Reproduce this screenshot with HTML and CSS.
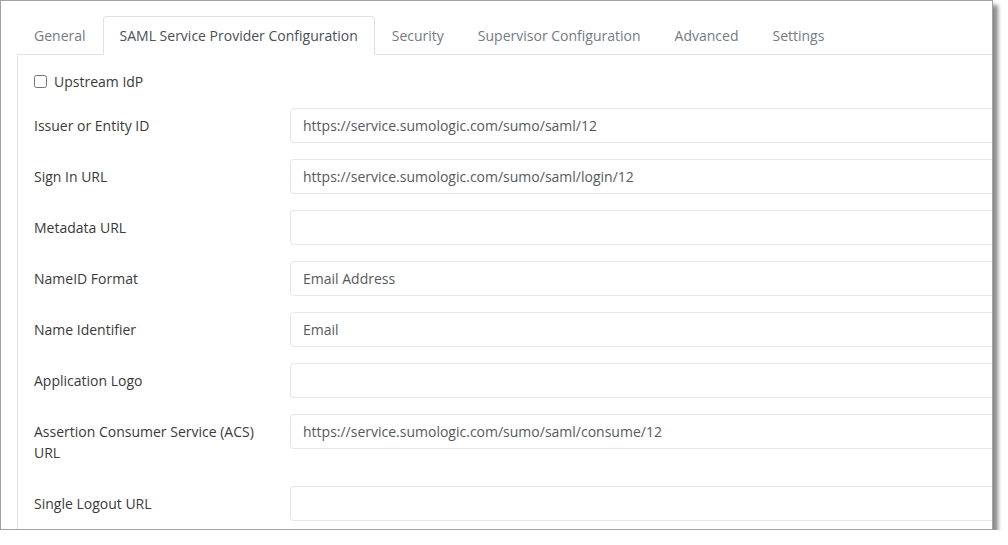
FILE: index.html
```html
<!DOCTYPE html>
<html>
<head>
<meta charset="utf-8">
<link rel="stylesheet" href="styles.css">
</head>
<body>
<div class="frame">
  <div class="tabs-wrap">
    <ul class="nav">
      <li class="nav-link">General</li>
      <li class="nav-link active">SAML Service Provider Configuration</li>
      <li class="nav-link">Security</li>
      <li class="nav-link">Supervisor Configuration</li>
      <li class="nav-link">Advanced</li>
      <li class="nav-link">Settings</li>
    </ul>
    <div class="panel">
      <div class="check-row">
        <input type="checkbox" class="check" id="upstream">
        <label for="upstream" class="check-label">Upstream IdP</label>
      </div>
      <div class="form-row">
        <label class="form-label">Issuer or Entity ID</label>
        <input class="form-control" type="text" value="https://service.sumologic.com/sumo/saml/12" readonly>
      </div>
      <div class="form-row">
        <label class="form-label">Sign In URL</label>
        <input class="form-control" type="text" value="https://service.sumologic.com/sumo/saml/login/12" readonly>
      </div>
      <div class="form-row">
        <label class="form-label">Metadata URL</label>
        <input class="form-control" type="text" value="" readonly>
      </div>
      <div class="form-row">
        <label class="form-label">NameID Format</label>
        <input class="form-control" type="text" value="Email Address" readonly>
      </div>
      <div class="form-row">
        <label class="form-label">Name Identifier</label>
        <input class="form-control" type="text" value="Email" readonly>
      </div>
      <div class="form-row">
        <label class="form-label">Application Logo</label>
        <input class="form-control" type="text" value="" readonly>
      </div>
      <div class="form-row">
        <label class="form-label">Assertion Consumer Service (ACS) URL</label>
        <input class="form-control" type="text" value="https://service.sumologic.com/sumo/saml/consume/12" readonly>
      </div>
      <div class="form-row">
        <label class="form-label">Single Logout URL</label>
        <input class="form-control" type="text" value="" readonly>
      </div>
    </div>
  </div>
</div>
</body>
</html>
```
FILE: styles.css
```css
* { box-sizing: border-box; }
html, body {
  margin: 0;
  padding: 0;
  background: #ffffff;
}
body {
  font-family: "Open Sans", "Liberation Sans", sans-serif;
  font-size: 14px;
  line-height: 21px;
  color: #3a3a3a;
}
.frame {
  width: 993px;
  height: 530px;
  border: 1px solid #a3a3a3;
  background: #fff;
  box-shadow: 5px 5px 4px rgba(0, 0, 0, 0.45);
  overflow: hidden;
  padding: 15px 0 0 16px;
}
.tabs-wrap {
  width: 1100px;
}
.nav {
  list-style: none;
  margin: 0;
  padding: 0;
  display: flex;
  border-bottom: 1px solid #dee2e6;
}
.nav-link {
  padding: 8px 16px;
  border: 1px solid transparent;
  border-top-left-radius: 4px;
  border-top-right-radius: 4px;
  margin-bottom: -1px;
  color: #737b83;
  white-space: nowrap;
}
.nav-link.active {
  color: #495057;
  background: #fff;
  border-color: #dee2e6 #dee2e6 #fff;
}
.panel {
  border-left: 1px solid #dee2e6;
  padding: 16px;
}
.check-row {
  display: flex;
  align-items: center;
  height: 21px;
  margin-bottom: 16px;
}
.check {
  width: 13px;
  height: 13px;
  margin: 0 7px 0 0;
}
.check-label {
  color: #3a3a3a;
}
.form-row {
  display: flex;
  align-items: flex-start;
  margin-bottom: 16px;
}
.form-label {
  width: 226px;
  flex: none;
  margin-right: 30px;
  padding: 7px 0;
  line-height: 21px;
  color: #3a3a3a;
}
.form-control {
  flex: 1;
  height: 35px;
  padding: 6px 12px;
  border: 1px solid #e3e6ea;
  border-radius: 4px;
  font-family: "Open Sans", "Liberation Sans", sans-serif;
  font-size: 14px;
  line-height: 21px;
  color: #555a60;
  background: #fff;
  outline: none;
}
```
